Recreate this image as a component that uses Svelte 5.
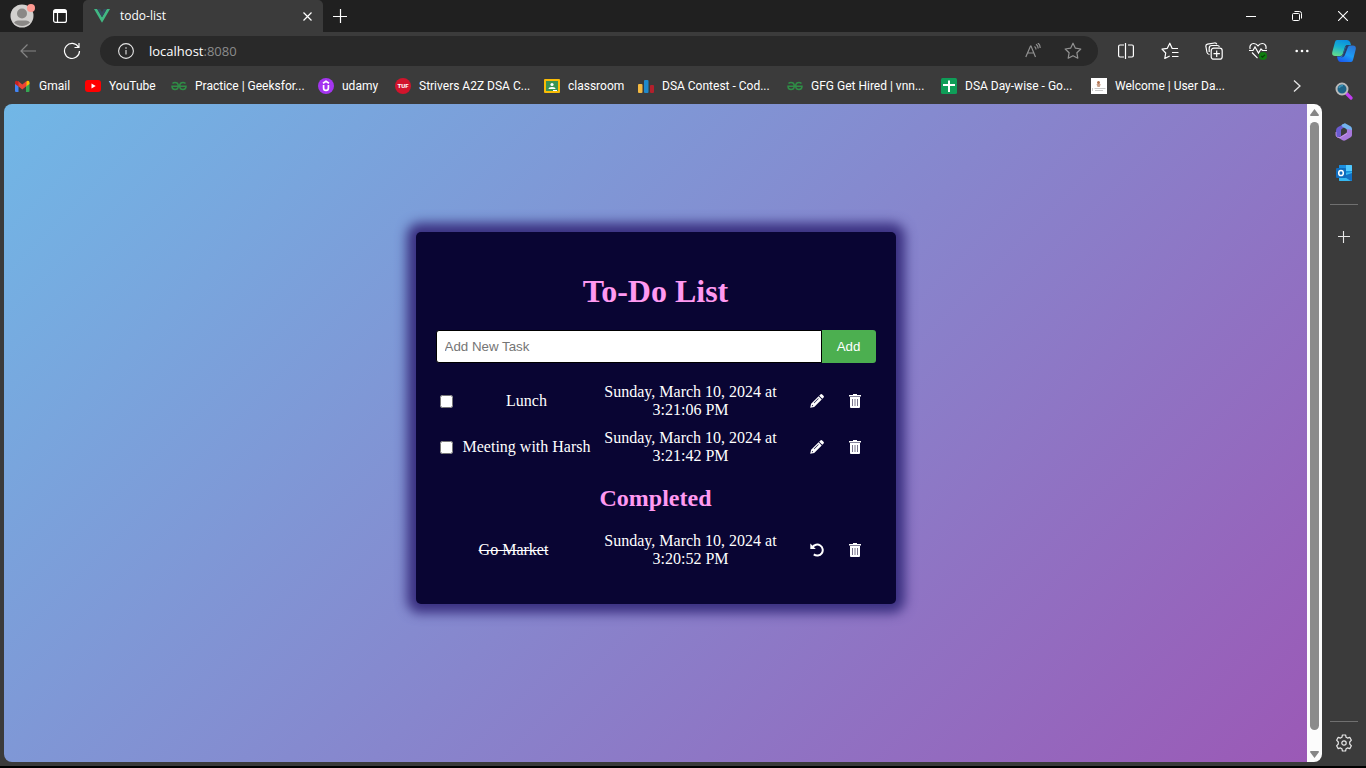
<script>
  let draft = $state('');
  let tasks = $state([
    { id: 1, name: 'Lunch', date: 'Sunday, March 10, 2024 at 3:21:06 PM', done: false },
    { id: 2, name: 'Meeting with Harsh', date: 'Sunday, March 10, 2024 at 3:21:42 PM', done: false },
    { id: 3, name: 'Go Market', date: 'Sunday, March 10, 2024 at 3:20:52 PM', done: true }
  ]);
  let open = $derived(tasks.filter((t) => !t.done));
  let completed = $derived(tasks.filter((t) => t.done));

  const bookmarks = [
    { icon: 'gmail', label: 'Gmail', width: 70 },
    { icon: 'youtube', label: 'YouTube', width: 86 },
    { icon: 'gfg', label: 'Practice | Geeksfor...', width: 147 },
    { icon: 'udemy', label: 'udamy', width: 77 },
    { icon: 'tuf', label: 'Strivers A2Z DSA C...', width: 149 },
    { icon: 'classroom', label: 'classroom', width: 94 },
    { icon: 'bars', label: 'DSA Contest - Cod...', width: 149 },
    { icon: 'gfg', label: 'GFG Get Hired | vnn...', width: 154 },
    { icon: 'sheets', label: 'DSA Day-wise - Go...', width: 150 },
    { icon: 'welcome', label: 'Welcome | User Da...', width: 150 }
  ];

  function add(event) {
    event.preventDefault();
    const name = draft.trim();
    if (!name) return;
    const date = new Date().toLocaleString('en-US', { dateStyle: 'full', timeStyle: 'medium' });
    tasks.push({ id: Date.now(), name, date, done: false });
    draft = '';
  }
  function remove(task) {
    tasks = tasks.filter((t) => t.id !== task.id);
  }
  function edit(task) {
    draft = task.name;
    remove(task);
  }
</script>

{#snippet favicon(name)}
  <svg class="favicon" viewBox="0 0 16 16" aria-hidden="true">
    {#if name === 'gmail'}
      <path fill="#4285f4" d="M0 4v9q0 1 1 1h2.500V7.500z" />
      <path fill="#34a853" d="M11 7.500V14H13.500q1 0 1-1V5z" />
      <path fill="#fbbc04" d="M11 4l1-1q1.500-.8 2.500 1v2L11 8.500z" />
      <path fill="#ea4335" d="M3 3l4.300 3.500L11.500 3v5l-4.200 3.500L3 8z" />
      <path fill="#c5221f" d="M0 4q.7-1.800 2.500-1L3.500 4v4.500L0 6z" />
    {:else if name === 'youtube'}
      <rect y="2" width="16" height="12" rx="3" fill="#f00" />
      <path d="M6.500 5.500v5l4.200-2.500z" fill="#fff" />
    {:else if name === 'gfg'}
      <g fill="none" stroke="#2f8d46" stroke-width="1.500">
        <path d="M1.500 5.500q1-1 2.500-1c2 0 3.300 1.500 3.300 3.500S6 11.500 4 11.500 1 10 1 8.300h14C15 10 14 11.500 12 11.500S8.700 10 8.700 8 10 4.500 12 4.500q1.500 0 2.500 1" />
      </g>
    {:else if name === 'udemy'}
      <circle cx="8" cy="8" r="8" fill="#a435f0" />
      <path d="M5 5.200L8 3.200l3 2M5.600 7v3a2.400 2.400 0 0 0 4.800 0V7" fill="none" stroke="#fff" stroke-width="1.700" />
    {:else if name === 'tuf'}
      <circle cx="8" cy="8" r="8" fill="#d2142c" />
      <text x="8" y="10" text-anchor="middle" font-size="6" font-weight="800" fill="#fff">TUF</text>
    {:else if name === 'classroom'}
      <rect y="1" width="16" height="14" rx="1" fill="#f9bc06" />
      <rect x="2" y="3" width="12" height="10" fill="#3a9454" />
      <circle cx="8" cy="6.500" r="1.600" fill="#fff" />
      <path d="M4.500 11q0-2 3.500-2t3.500 2z" fill="#fff" />
      <path d="M9 12h4v1H9z" fill="#fff" />
    {:else if name === 'bars'}
      <rect y="6" width="4.500" height="9" rx="1" fill="#f4b940" />
      <rect x="6" y="2" width="4.500" height="13" rx="1" fill="#1f8acb" />
      <rect x="12" y="7" width="4" height="8" rx="1" fill="#b3202c" />
    {:else if name === 'sheets'}
      <rect width="16" height="16" rx="1.500" fill="#0f9d58" />
      <path d="M7 2.500h2V6h5v2H9v6H7V8H2V6h5z" fill="#fff" />
    {:else}
      <rect width="16" height="16" fill="#fff" />
      <circle cx="7.500" cy="4.500" r="1.500" fill="#b0714d" />
      <path d="M5.500 6h4.200l-1 3H6.500z" fill="#c9a08a" />
      <path d="M3.500 10.500h11M4 12.500h8M1.500 10v3" stroke="#bbb" stroke-width=".8" />
    {/if}
  </svg>
{/snippet}

{#snippet trash()}
  <svg class="glyph" viewBox="0 0 14 14" aria-hidden="true">
    <path fill="#fff" d="M5 0h4v1h4v1.500H1V1h4zM2 3h10v10a1 1 0 0 1-1 1H3a1 1 0 0 1-1-1z" />
    <path fill="none" stroke="#55516f" stroke-width=".8" d="M4.500 5v7M7 5v7M9.500 5v7" />
  </svg>
{/snippet}

<div class="browser">
  <header class="tabstrip">
    <button class="profile" aria-label="Profile">
      <svg width="26" height="24" viewBox="0 0 26 24">
        <circle cx="12" cy="12" r="11.500" fill="#d2d0ce" />
        <circle cx="12" cy="9.500" r="5" fill="#8a8886" />
        <path d="M4 18.500q1.500-2 4-2h8q2.500 0 4 2a11 11 0 0 1-16 0z" fill="#8a8886" />
        <circle cx="21" cy="4" r="4" fill="#ff9a92" />
      </svg>
    </button>
    <button class="workspaces" aria-label="Tab actions">
      <svg width="14" height="14" viewBox="0 0 14 14" fill="none" stroke="#fff" stroke-width="1.200">
        <rect x=".6" y=".6" width="12.800" height="12.800" rx="2" />
        <path d="M1 2.500h12" stroke-width="3" />
        <path d="M4.500 4v9.500" />
      </svg>
    </button>
    <div class="tab">
      <svg class="favicon" viewBox="0 0 16 16" aria-hidden="true">
        <path d="M0 1h3.200L8 9.300 12.800 1H16L8 14.800z" fill="#41b883" />
        <path d="M3.200 1h3L8 4.200 9.800 1h3L8 9.300z" fill="#35495e" />
      </svg>
      <span class="tab-title">todo-list</span>
      <button class="tab-close" aria-label="Close tab">
        <svg width="9" height="9" viewBox="0 0 9 9" stroke="#fff" stroke-width="1.200"><path d="M.5.500l8 8M8.500.500l-8 8" /></svg>
      </button>
    </div>
    <button class="new-tab" aria-label="New tab">
      <svg width="14" height="14" viewBox="0 0 14 14" stroke="#fff" stroke-width="1.200"><path d="M7.500 0v14M0 7.500h14" /></svg>
    </button>
    <div class="window-controls">
      <button aria-label="Minimize"><svg width="10" height="10" viewBox="0 0 10 10" stroke="#fff"><path d="M0 5.500h10" /></svg></button>
      <button aria-label="Restore">
        <svg width="10" height="10" viewBox="0 0 10 10" fill="none" stroke="#fff"><rect x=".5" y="2.500" width="7" height="7" rx="1" /><path d="M2.500.500H7.500q2 0 2 2v5" /></svg>
      </button>
      <button aria-label="Close"><svg width="10" height="10" viewBox="0 0 10 10" stroke="#fff" stroke-width="1.100"><path d="M0 0l10 10M10 0L0 10" /></svg></button>
    </div>
  </header>

  <nav class="toolbar">
    <button class="nav-button" aria-label="Back">
      <svg width="16" height="14" viewBox="0 0 16 14" fill="none" stroke="#858585" stroke-width="1.200"><path d="M16 7H1M7.500.500L1 7l6.500 6.500" /></svg>
    </button>
    <button class="nav-button" aria-label="Refresh">
      <svg width="18" height="18" viewBox="0 0 18 18" fill="none" stroke="#fff" stroke-width="1.200"><path d="M15.500 5.200A7.500 7.500 0 1 0 16.500 9M16 1v4.500h-4.500" /></svg>
    </button>
    <div class="address">
      <button class="info" aria-label="Site information">
        <svg width="16" height="16" viewBox="0 0 16 16" fill="none" stroke="#e6e6e6" stroke-width="1.100"><circle cx="8" cy="8" r="7.400" /><path d="M8 7v4.500M8 4.300v1.400" /></svg>
      </button>
      <span class="url">localhost<span class="port">:8080</span></span>
      <button class="address-action" aria-label="Read aloud">
        <svg width="16" height="16" viewBox="0 0 16 16" fill="none" stroke="#929292" stroke-width="1.200"><path d="M.8 14L5.500 3h.5L10.500 14M2.500 10h6.300M9.500 3.500q1.500 1 1.500 3M11 1.300q2.200 1.200 2.200 4.200M12.800 0q2.400 1.500 2.400 5" /></svg>
      </button>
      <button class="address-action" aria-label="Add to favorites">
        <svg width="18" height="18" viewBox="0 0 18 18" fill="none" stroke="#929292" stroke-width="1.200" stroke-linejoin="round"><path d="M9 1.200l2.400 5 5.400.800-3.900 3.800.9 5.400L9 13.700l-4.800 2.500.9-5.400L1.200 7l5.400-.800z" /></svg>
      </button>
    </div>
    <button class="tool" aria-label="Split screen">
      <svg width="16" height="16" viewBox="0 0 16 16" fill="none" stroke="#fff" stroke-width="1.200"><path d="M6 2H2Q.6 2 .6 3.400v9.200Q.6 14 2 14h4M10 2h4q1.400 0 1.400 1.400v9.200q0 1.400-1.400 1.400h-4M7.500 0v16" /></svg>
    </button>
    <button class="tool" aria-label="Favorites">
      <svg width="18" height="18" viewBox="0 0 18 18" fill="none" stroke="#fff" stroke-width="1.200" stroke-linejoin="round"><path d="M17 6.500h-5.800L8.800 1.200 6.300 6.300l-5.300.9 3.700 3.800-.9 5.500L8.700 14M11 10.500h6.500M11 14.500h6.500" /></svg>
    </button>
    <button class="tool" aria-label="Collections">
      <svg width="18" height="18" viewBox="0 0 18 18" fill="none" stroke="#fff" stroke-width="1.200"><rect x="6.200" y="6.200" width="11" height="11" rx="2.500" /><path d="M11.700 8.500v6.400M8.500 11.700h6.400M4.500 12.500Q2.300 12 2 10.500L.9 4.500Q.6 2.500 2.500 2.200L9.500 1q1.800-.2 2.300 1.300M4.200 10V6.200q0-2.700 2.700-2.700h5.500q1.600 0 2 1.200" /></svg>
    </button>
    <button class="tool" aria-label="Browser essentials">
      <svg width="18" height="18" viewBox="0 0 18 18" fill="none" stroke="#fff" stroke-width="1.200"><path d="M1.200 7C.2 4 2 1.500 4.700 1.500q2.600 0 4.300 2.300Q10.700 1.500 13.200 1.500c2.900 0 4.500 2.500 3.600 5.500M3 10.500l5.500 5.600M0 8.500h4L6 5l3.500 6L12 7l1.500 1.500H18" /><circle cx="14" cy="14" r="4" fill="#107c10" stroke="none" /><path d="M12.300 14l1.200 1.200 2.400-2.400" stroke="#093f09" /></svg>
    </button>
    <button class="tool" aria-label="Settings and more">
      <svg width="14" height="4" viewBox="0 0 14 4" fill="#fff"><circle cx="1.700" cy="2" r="1.300" /><circle cx="7" cy="2" r="1.300" /><circle cx="12.300" cy="2" r="1.300" /></svg>
    </button>
    <button class="copilot" aria-label="Copilot">
      <svg width="24" height="24" viewBox="0 0 24 24">
        <defs>
          <linearGradient id="cop-a" x1=".6" y1="0" x2=".3" y2="1"><stop stop-color="#0b8fe0" /><stop offset=".45" stop-color="#16b0d0" /><stop offset="1" stop-color="#62dc8c" /></linearGradient>
          <linearGradient id="cop-b" x1=".8" y1="0" x2=".3" y2="1"><stop stop-color="#2b74d4" /><stop offset=".55" stop-color="#1c9df5" /><stop offset="1" stop-color="#1a5df0" /></linearGradient>
        </defs>
        <path d="M5 1h10q2.500 0 3.300 2.500L19 6h-3.500q-2 0-2.600 2l-2.200 7q-.7 2-2.700 2H3Q-.5 17 .3 13L3 3q.5-2 2-2z" fill="url(#cop-a)" />
        <path d="M19 23H9q-2.500 0-3.300-2.500L5 17.500h3.500q2 0 2.600-2l2.200-7q.7-2 2.700-2h5q3.500 0 2.700 4L21 21q-.5 2-2 2z" fill="url(#cop-b)" />
        <path d="M14.500 6L10.500 17.200q-.5 1-2 1.200 3 .300 4.300-2.200l3-7.700q.7-2 2.200-2.200-2.500-.6-3.500-.3z" fill="#283d69" />
      </svg>
    </button>
  </nav>

  <div class="body">
    <div class="content">
      <nav class="bookmarks" aria-label="Bookmarks">
        {#each bookmarks as mark}
          <a href="#top" style:width="{mark.width}px">{@render favicon(mark.icon)}<span>{mark.label}</span></a>
        {/each}
        <button class="more" aria-label="More bookmarks">
          <svg width="8" height="12" viewBox="0 0 8 12" fill="none" stroke="#e6e6e6" stroke-width="1.300"><path d="M1 .500L7 6l-6 5.500" /></svg>
        </button>
      </nav>

      <div class="viewport">
        <main>
          <section class="card">
            <h1>To-Do List</h1>
            <form onsubmit={add}>
              <input class="new-task" type="text" aria-label="New task" placeholder="Add New Task" bind:value={draft} />
              <button class="add">Add</button>
            </form>
            <table>
              <tbody>
                {#each open as task (task.id)}
                  <tr>
                    <td class="check"><input type="checkbox" aria-label={task.name} bind:checked={task.done} /></td>
                    <td>{task.name}</td>
                    <td class="date">{task.date}</td>
                    <td class="actions">
                      <div class="buttons">
                        <button aria-label="Edit" onclick={() => edit(task)}>
                          <svg class="glyph" viewBox="0 0 14 14" fill="#fff" aria-hidden="true"><path d="M10.400.500q.9-.9 1.800 0l1.300 1.300q.9.900 0 1.800l-1.200 1.200-3.100-3.100z" /><path fill-rule="evenodd" d="M8.600 2.300l3.100 3.100L4.200 12.900.200 13.800 1.100 9.800zM2.100 10.800l-.3 1.400 1.400-.3zM8.300 4.300L3.800 8.800l.4.400 4.500-4.500z" /></svg>
                        </button>
                        <button aria-label="Delete" onclick={() => remove(task)}>{@render trash()}</button>
                      </div>
                    </td>
                  </tr>
                {/each}
              </tbody>
            </table>
            <h2>Completed</h2>
            <table>
              <tbody>
                {#each completed as task (task.id)}
                  <tr>
                    <td class="struck">{task.name}</td>
                    <td class="date">{task.date}</td>
                    <td class="actions">
                      <div class="buttons">
                        <button aria-label="Restore" onclick={() => (task.done = false)}>
                          <svg class="glyph" viewBox="0 0 14 14" aria-hidden="true"><path d="M2.500 4.300A5.500 5.500 0 1 1 3.800 11.400" fill="none" stroke="#fff" stroke-width="2" /><path d="M.3.500v5.500h5.500z" fill="#fff" /></svg>
                        </button>
                        <button aria-label="Delete" onclick={() => remove(task)}>{@render trash()}</button>
                      </div>
                    </td>
                  </tr>
                {/each}
              </tbody>
            </table>
          </section>
        </main>
        <div class="scrollbar" aria-hidden="true">
          <svg width="9" height="7" viewBox="0 0 9 7" fill="#858585"><path d="M4.500 0L9 6q0 1-1 1H1Q0 7 0 6z" /></svg>
          <div class="thumb"></div>
          <svg width="9" height="7" viewBox="0 0 9 7" fill="#858585"><path d="M4.500 7L9 1q0-1-1-1H1Q0 0 0 1z" /></svg>
        </div>
      </div>
    </div>

    <aside class="sidebar">
      <button aria-label="Search">
        <svg width="18" height="18" viewBox="0 0 18 18"><path d="M11.500 11.500l4.500 4.500" stroke="#c13cf0" stroke-width="3.200" stroke-linecap="round" /><circle cx="7" cy="7" r="5.500" fill="#1e6488" stroke="#b9b9b9" stroke-width="2" /><path d="M4 6q1-2.500 4-2.500" fill="none" stroke="#3c94b8" stroke-width="1.500" /></svg>
      </button>
      <button aria-label="Microsoft 365">
        <svg width="18" height="18" viewBox="0 0 18 18">
          <path d="M10 .500L3 4Q1 5 1 7.500V12q0 2 2 2.500L6 13V7.500q0-1.200 1-1.800L11.500 3z" fill="#6a5bd0" />
          <path d="M7 1.500L10 .300l5.500 3Q17 4.300 17 6v6.500l-5-3V7.500q0-1-1-1.700L7.500 3.800Q5.800 2.800 7 1.500z" fill="#72b3ee" />
          <path d="M17 7v5q0 1.500-1.300 2.300L10.500 17.300q-1.500.8-3 0L2 14q2 1 4-.8l5-3q1-.7 1-2V6z" fill="#a878dc" />
          <path d="M1 9v3q0 1.500 1.500 2.300 2.500 1 4.500-.8L12 10.500" fill="none" stroke="#d0a0ec" stroke-width=".8" />
        </svg>
      </button>
      <button aria-label="Outlook">
        <svg width="16" height="16" viewBox="0 0 16 16"><rect x="3" width="13" height="16" rx="1" fill="#1490df" /><path d="M10 0h5q1 0 1 1v5h-6z" fill="#50c9ff" /><path d="M3 1q0-1 1-1h6v6H3z" fill="#1b8fe0" /><path d="M3 9l13-2v8q0 1-1 1H4q-1 0-1-1z" fill="#35b8f1" /><path d="M16 8v7q0 1-1 1l-8-5z" fill="#1070c5" /><rect y="3" width="10" height="10" rx="1" fill="#0f6cbd" /><ellipse cx="5" cy="8" rx="2.300" ry="2.600" fill="none" stroke="#fff" stroke-width="1.500" /></svg>
      </button>
      <hr />
      <button aria-label="Customize">
        <svg width="12" height="12" viewBox="0 0 12 12" stroke="#e6e6e6" stroke-width="1.100"><path d="M5.500 0v12M0 5.500h12" /></svg>
      </button>
      <div class="spacer"></div>
      <hr />
      <button aria-label="Settings">
        <svg width="18" height="18" viewBox="0 0 18 18" fill="none" stroke="#e6e6e6" stroke-width="1.200" stroke-linejoin="round"><path d="M7.400 1h3.200l.5 2.300 1.400.8 2.300-.7 1.600 2.800L14.700 8v2l1.700 1.800-1.600 2.800-2.300-.7-1.400.8-.5 2.300H7.400l-.5-2.300-1.400-.8-2.300.7-1.600-2.800L3.300 10V8L1.600 6.200l1.600-2.800 2.300.7 1.400-.8z" /><circle cx="9" cy="9" r="2.200" /></svg>
      </button>
    </aside>
  </div>
</div>

<style>
  :global(body) { margin: 0; background: #3b3b3b; }
  * { box-sizing: border-box; }
  button { display: flex; align-items: center; justify-content: center; flex: none; margin: 0; padding: 0; border: 0; background: none; color: inherit; }
  svg { display: block; flex: none; }

  .browser { display: flex; flex-direction: column; min-height: 100vh; background: #3b3b3b; border-bottom: 2px solid #000; color: #fff; font: 12px/16px "Open Sans", "Noto Sans", sans-serif; }

  .tabstrip { display: flex; height: 32px; background: #202020; }
  .profile { width: 26px; margin-left: 10px; }
  .workspaces { width: 48px; }
  .tab { display: flex; align-items: center; width: 240px; margin-left: -1px; padding: 0 11px; background: #3b3b3b; border-radius: 5px 5px 0 0; }
  .favicon { width: 16px; height: 16px; }
  .tab-title { flex: 1; margin-left: 10px; }
  .tab-close { width: 9px; height: 24px; }
  .new-tab { width: 34px; }
  .window-controls { display: flex; margin-left: auto; }
  .window-controls button { width: 46px; }

  .toolbar { display: flex; align-items: center; height: 38px; padding-left: 6px; }
  .nav-button { width: 44px; height: 30px; }
  .address { display: flex; flex: 1; align-items: center; height: 30px; margin: 0 6px; padding: 0 5px 0 18px; border-radius: 15px; background: #292929; font-size: 13px; }
  .url { flex: 1; margin-left: 15px; }
  .port { color: #8c8c8c; }
  .address-action { width: 40px; height: 30px; }
  .tool { width: 44px; height: 30px; }
  .copilot { width: 42px; height: 30px; padding-right: 2px; }

  .body { display: flex; flex: 1; }
  .content { display: flex; flex: 1; flex-direction: column; min-width: 0; padding: 0 0 4px 4px; }
  .bookmarks { display: flex; align-items: center; height: 34px; padding: 0 21px 2px 11px; font-family: Roboto, "Noto Sans", sans-serif; }
  .bookmarks a { display: flex; align-items: center; gap: 8px; color: #fff; text-decoration: none; white-space: nowrap; }
  .more { width: 8px; height: 24px; margin-left: auto; }

  .viewport { display: flex; flex: 1; overflow: hidden; border-radius: 8px; }
  main { display: flex; flex: 1; align-items: center; justify-content: center; padding-bottom: 30px; background: linear-gradient(135deg, #71b7e6, #9b59b6); font: 16px/18px "Liberation Serif", serif; }
  .card { width: 480px; padding: 20px 20px 31px; border-radius: 5px; background: #090533; box-shadow: 0 0 12px 9px #3a3080; text-align: center; }
  h1, h2 { color: #ff99f1; }
  h1 { margin: 21px 0 20px; font-size: 32px; line-height: 37px; }
  h2 { margin: 14px 0 15px; font-size: 24px; line-height: 28px; }
  form { display: flex; height: 33px; margin-bottom: 15px; }
  .new-task, .add { font-family: "Liberation Sans", Arial, sans-serif; }
  .new-task { flex: 1; min-width: 0; padding: 8px; border: 1px solid #000; border-radius: 3px 0 0 3px; background: #fff; color: #222; }
  .new-task::placeholder { color: #757575; }
  .add { width: 54px; border-radius: 0 3px 3px 0; background: #4caf50; }

  table { width: 100%; border-collapse: collapse; table-layout: fixed; }
  td { padding: 5px 0; }
  .check { width: 26px; }
  .check input { display: block; width: 13px; height: 13px; margin: 0 4px; }
  .date { width: 198px; padding: 5px 12px; }
  .actions { width: 86px; }
  .buttons { display: flex; padding-left: 8px; }
  .buttons button { width: 38px; height: 24px; }
  .glyph { width: 14px; height: 14px; }
  .struck { text-decoration: line-through; }

  .scrollbar { display: flex; flex-direction: column; align-items: center; gap: 6px; width: 15px; padding: 5px 0 4px; background: #fcfcfc; }
  .thumb { flex: 1; width: 9px; margin-bottom: 15px; border-radius: 5px; background: #8b8b8b; }

  .sidebar { display: flex; flex-direction: column; width: 44px; align-items: center; padding-bottom: 3px; }
  .sidebar button { width: 44px; height: 41px; }
  hr { width: 28px; height: 1px; margin: 11px 0; border: 0; background: #707070; }
  .spacer { flex: 1; }
  .spacer + hr { margin: 0; }
</style>
